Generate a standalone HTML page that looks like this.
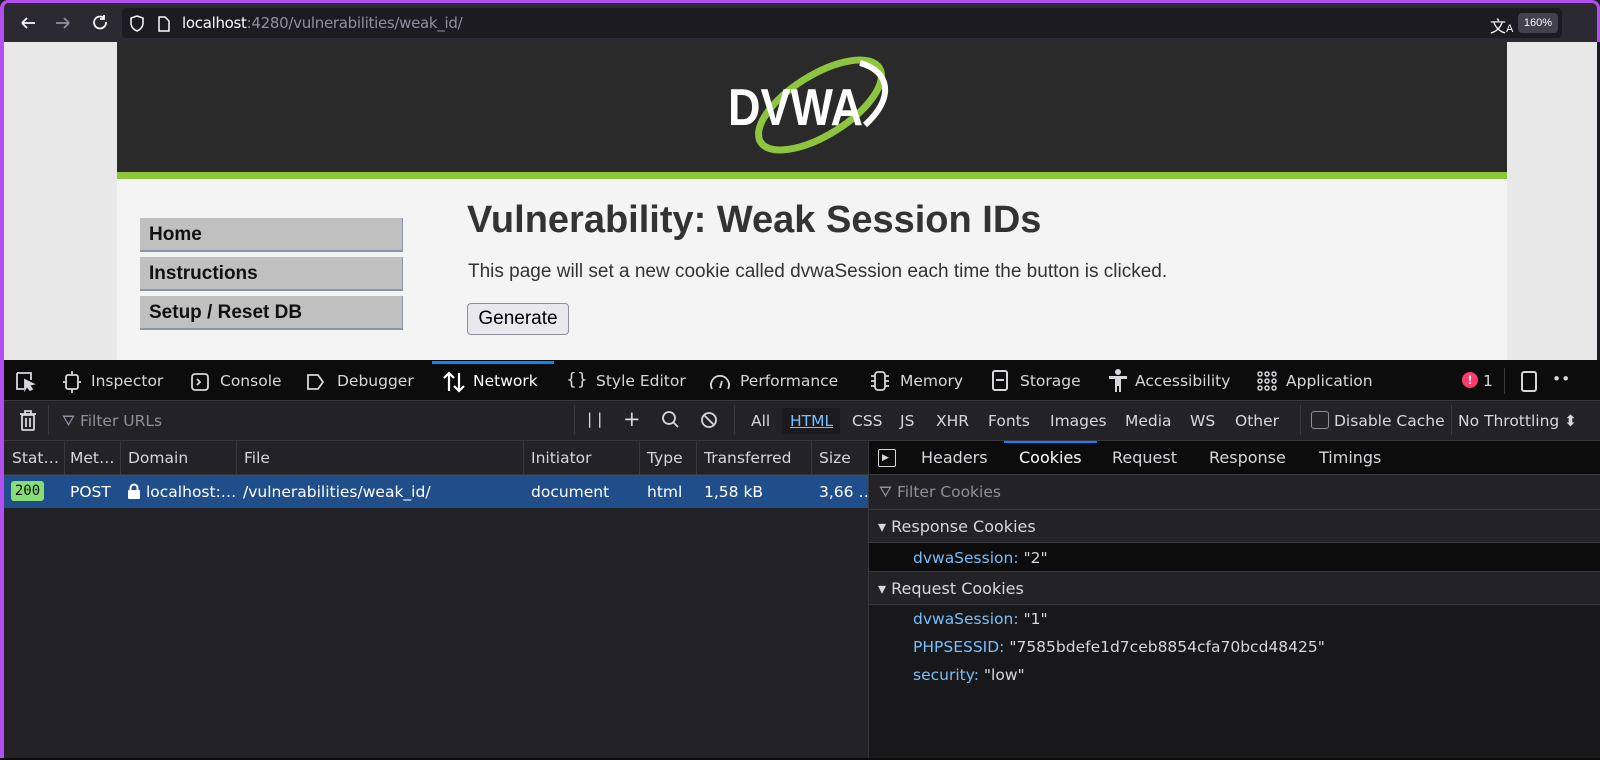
<!DOCTYPE html>
<html><head><meta charset="utf-8"><style>
*{margin:0;padding:0;box-sizing:border-box}
body{width:1600px;height:760px;overflow:hidden;background:#1c1b22;font-family:"Liberation Sans",sans-serif;position:relative}
.a{position:absolute}
.dt{font-family:"DejaVu Sans","Liberation Sans",sans-serif;font-size:15.5px;color:#d7d7db;white-space:nowrap}
.ic{stroke:#d7d7db;fill:none;stroke-width:1.8}
</style></head><body>
<div class="a" style="left:0;top:0;width:1600px;height:42px;background:#2b2a33;border-top:3px solid #b34ef0;border-left:4px solid #b34ef0;border-right:3px solid #b34ef0;border-radius:8px 8px 0 0"></div>
<div class="a" style="left:0;top:40px;width:4px;height:720px;background:#b34ef0"></div>
<svg class="a" style="left:18px;top:13px" width="100" height="20"><g stroke="#fbfbfe" stroke-width="1.8" fill="none"><path d="M4 10h13M4 10l5-5M4 10l5 5"/><path d="M38 10h13M51 10l-5-5M51 10l-5 5" stroke="#8f8f9d"/><path d="M86 5a6 6 0 1 0 2 4M86 2v4h-4"/></g></svg>
<div class="a" style="left:122px;top:8px;width:1440px;height:30px;background:#1c1b22;border-radius:4px"></div>
<svg class="a" style="left:128px;top:14px" width="50" height="20"><g stroke="#fbfbfe" stroke-width="1.5" fill="none"><path d="M9 2l6 2v5c0 4-3 7-6 8-3-1-6-4-6-8V4z"/><path d="M31 3h6l4 4v10h-10z"/></g></svg>
<div class="a" style="left:182px;top:14px;font-size:15px;color:#fbfbfe;font-family:'DejaVu Sans',sans-serif;letter-spacing:-0.3px">localhost<span style="color:#8f8f9d">:4280/vulnerabilities/weak_id/</span></div>
<div class="a" style="left:1490px;top:13px;font-size:16px;color:#fbfbfe">文<span style="font-size:11px">A</span></div>
<div class="a" style="left:1518px;top:13px;width:40px;height:20px;background:#42414d;border-radius:4px;color:#fbfbfe;font-size:11px;text-align:center;line-height:20px">160%</div>
<div class="a" style="left:4px;top:42px;width:1593px;height:318px;background:#e8e8e8"></div>
<div class="a" style="left:117px;top:42px;width:1390px;height:130px;background:#2a2a2a"></div>
<div class="a" style="left:117px;top:172px;width:1390px;height:7px;background:#8dc53e"></div>
<div class="a" style="left:117px;top:179px;width:1390px;height:181px;background:#f4f4f4"></div>
<svg class="a" style="left:720px;top:55px" width="185" height="100">
<ellipse cx="100" cy="50" rx="70" ry="30" transform="rotate(-32 100 50)" fill="none" stroke="#8dc53e" stroke-width="7"/>
<path d="M140 8c30 8 35 35 5 62" stroke="#fff" stroke-width="6" fill="none"/>
<text x="8" y="70" font-family="Liberation Sans" font-weight="bold" font-size="52" fill="#fff" textLength="135" lengthAdjust="spacingAndGlyphs">DVWA</text></svg>
<div class="a" style="left:140px;top:218px;width:263px;height:34px;background:#c0c0c0;border-bottom:2px solid #8a96a8;border-right:1px solid #8a96a8;font:bold 19px 'Liberation Sans';color:#111;padding:6px 9px">Home</div>
<div class="a" style="left:140px;top:257px;width:263px;height:34px;background:#c0c0c0;border-bottom:2px solid #8a96a8;border-right:1px solid #8a96a8;font:bold 19px 'Liberation Sans';color:#111;padding:6px 9px">Instructions</div>
<div class="a" style="left:140px;top:296px;width:263px;height:34px;background:#c0c0c0;border-bottom:2px solid #8a96a8;border-right:1px solid #8a96a8;font:bold 19px 'Liberation Sans';color:#111;padding:6px 9px">Setup / Reset DB</div>
<div class="a" style="left:467px;top:199px;font:bold 38px 'Liberation Sans';color:#333">Vulnerability: Weak Session IDs</div>
<div class="a" style="left:468px;top:261px;font-size:19px;color:#333">This page will set a new cookie called dvwaSession each time the button is clicked.</div>
<div class="a" style="left:467px;top:303px;width:102px;height:32px;background:#e9e9ed;border:1px solid #8f8f9d;border-radius:4px;font-size:19px;color:#000;text-align:center;line-height:30px">Generate</div>
<div class="a" style="left:4px;top:360px;width:1596px;height:41px;background:#0c0c0d;border-bottom:1px solid #38383d"></div>
<div class="a" style="left:432px;top:361px;width:122px;height:3px;background:#0a84ff"></div>
<svg class="a" style="left:14px;top:370px" width="400" height="24"><g class="ic"><path d="M3 3h14v7M3 3v16h7"/><path d="M11 10l8 4-4 1 3 4-2 1-3-4-2 3z" fill="#d7d7db"/><rect x="52" y="5" width="12" height="14" rx="2"/><path d="M58 1v4M58 19v4M49 12h3M64 12h3"/><rect x="178" y="4" width="16" height="16" rx="3"/><path d="M183 9l3 3-3 3"/><path d="M294 5h10l5 7-5 7h-10z"/></g></svg>
<svg class="a" style="left:442px;top:370px" width="24" height="24"><g stroke="#fff" stroke-width="2.2" fill="none"><path d="M7 21V3M2 8l5-5 5 5"/><path d="M17 3v18M12 16l5 5 5-5"/></g></svg>
<svg class="a" style="left:708px;top:370px" width="26" height="24"><g class="ic"><path d="M4 19a9 9 0 1 1 16 0"/><path d="M12 18l2-7"/></g></svg>
<svg class="a" style="left:868px;top:369px" width="26" height="24"><g class="ic"><rect x="7" y="3" width="10" height="18" rx="3"/><path d="M3 7h4M3 12h4M3 17h4M17 7h4M17 12h4M17 17h4"/></g></svg>
<svg class="a" style="left:1106px;top:368px" width="24" height="26"><g fill="#d7d7db"><circle cx="12" cy="4" r="3"/><path d="M3 8h18v3h-6v13h-2v-6h-2v6H9V11H3z"/></g></svg>
<svg class="a" style="left:1256px;top:370px" width="22" height="22"><g fill="none" stroke="#d7d7db" stroke-width="1.5"><circle cx="4" cy="4" r="2"/><circle cx="11" cy="4" r="2"/><circle cx="18" cy="4" r="2"/><circle cx="4" cy="11" r="2"/><circle cx="11" cy="11" r="2"/><circle cx="18" cy="11" r="2"/><circle cx="4" cy="18" r="2"/><circle cx="11" cy="18" r="2"/><circle cx="18" cy="18" r="2"/></g></svg>
<div class="a dt" style="left:91px;top:372px">Inspector</div>
<div class="a dt" style="left:220px;top:372px">Console</div>
<div class="a dt" style="left:337px;top:372px">Debugger</div>
<div class="a dt" style="left:473px;top:372px;color:#fff">Network</div>
<div class="a dt" style="left:566px;top:370px;font-size:17px">{}</div>
<div class="a dt" style="left:596px;top:372px">Style Editor</div>
<div class="a dt" style="left:740px;top:372px">Performance</div>
<div class="a dt" style="left:900px;top:372px">Memory</div>
<div class="a" style="left:992px;top:370px;width:16px;height:21px;border:2px solid #d7d7db;border-radius:3px"></div>
<div class="a" style="left:996px;top:379px;width:8px;height:2px;background:#d7d7db"></div>
<div class="a dt" style="left:1020px;top:372px">Storage</div>
<div class="a dt" style="left:1135px;top:372px">Accessibility</div>
<div class="a dt" style="left:1286px;top:372px">Application</div>
<div class="a" style="left:1462px;top:372px;width:16px;height:16px;border-radius:50%;background:#ff3b6b;color:#fff;font:bold 12px 'Liberation Sans';text-align:center;line-height:16px">!</div>
<div class="a dt" style="left:1483px;top:372px">1</div>
<div class="a" style="left:1504px;top:368px;width:1px;height:26px;background:#38383d"></div>
<div class="a" style="left:1521px;top:371px;width:16px;height:21px;border:2px solid #d7d7db;border-radius:3px"></div>
<div class="a dt" style="left:1552px;top:370px">••</div>
<div class="a" style="left:4px;top:401px;width:1596px;height:40px;background:#232327;border-bottom:1px solid #38383d"></div>
<svg class="a" style="left:18px;top:409px" width="20" height="24"><g class="ic"><path d="M2 5h16M7 5V2h6v3"/><rect x="4" y="6" width="12" height="15" rx="1"/><path d="M8 9v9M12 9v9"/></g></svg>
<div class="a" style="left:48px;top:405px;width:1px;height:30px;background:#38383d"></div>
<div class="a dt" style="left:62px;top:412px;color:#8f8f9d">⛛ Filter URLs</div>
<div class="a" style="left:574px;top:405px;width:1px;height:30px;background:#38383d"></div>
<div class="a dt" style="left:587px;top:410px">| |</div>
<div class="a dt" style="left:623px;top:407px;font-size:21px">+</div>
<svg class="a" style="left:660px;top:410px" width="60" height="20"><g class="ic"><circle cx="9" cy="8" r="6"/><path d="M13 12l5 5"/><circle cx="49" cy="10" r="7"/><path d="M44 5l10 10"/></g></svg>
<div class="a" style="left:734px;top:405px;width:1px;height:30px;background:#38383d"></div>
<div class="a dt" style="left:751px;top:412px">All</div>
<div class="a" style="left:782px;top:408px;width:58px;height:26px;background:#1b1b1d"></div>
<div class="a dt" style="left:790px;top:412px;color:#75bfff;text-decoration:underline">HTML</div>
<div class="a dt" style="left:852px;top:412px">CSS</div>
<div class="a dt" style="left:900px;top:412px">JS</div>
<div class="a dt" style="left:936px;top:412px">XHR</div>
<div class="a dt" style="left:988px;top:412px">Fonts</div>
<div class="a dt" style="left:1050px;top:412px">Images</div>
<div class="a dt" style="left:1125px;top:412px">Media</div>
<div class="a dt" style="left:1190px;top:412px">WS</div>
<div class="a dt" style="left:1235px;top:412px">Other</div>
<div class="a" style="left:1300px;top:405px;width:1px;height:30px;background:#38383d"></div>
<div class="a" style="left:1311px;top:411px;width:18px;height:18px;border:1.5px solid #8f8f9d;border-radius:3px"></div>
<div class="a dt" style="left:1334px;top:412px">Disable Cache</div>
<div class="a" style="left:1451px;top:405px;width:1px;height:30px;background:#38383d"></div>
<div class="a dt" style="left:1458px;top:412px">No Throttling ⬍</div>
<div class="a" style="left:4px;top:441px;width:864px;height:34px;background:#232327;border-bottom:1px solid #38383d"></div>
<div class="a dt" style="left:12px;top:449px">Stat…</div>
<div class="a dt" style="left:70px;top:449px">Met…</div>
<div class="a dt" style="left:128px;top:449px">Domain</div>
<div class="a dt" style="left:244px;top:449px">File</div>
<div class="a dt" style="left:531px;top:449px">Initiator</div>
<div class="a dt" style="left:647px;top:449px">Type</div>
<div class="a dt" style="left:704px;top:449px">Transferred</div>
<div class="a dt" style="left:819px;top:449px">Size</div>
<div class="a" style="left:64px;top:441px;width:1px;height:34px;background:#38383d"></div>
<div class="a" style="left:120px;top:441px;width:1px;height:34px;background:#38383d"></div>
<div class="a" style="left:236px;top:441px;width:1px;height:34px;background:#38383d"></div>
<div class="a" style="left:523px;top:441px;width:1px;height:34px;background:#38383d"></div>
<div class="a" style="left:639px;top:441px;width:1px;height:34px;background:#38383d"></div>
<div class="a" style="left:696px;top:441px;width:1px;height:34px;background:#38383d"></div>
<div class="a" style="left:811px;top:441px;width:1px;height:34px;background:#38383d"></div>
<div class="a" style="left:4px;top:475px;width:864px;height:33px;background:#204e8a"></div>
<div class="a" style="left:11px;top:481px;width:33px;height:20px;background:#86de74;border-radius:3px;color:#0b0b0b;font:14px 'DejaVu Sans Mono';text-align:center;line-height:20px">200</div>
<div class="a dt" style="left:70px;top:483px;color:#fff">POST</div>
<svg class="a" style="left:127px;top:483px" width="14" height="17"><rect x="1" y="7" width="12" height="9" rx="1" fill="#fff"/><path d="M3.5 7V5a3.5 3.5 0 0 1 7 0v2" stroke="#fff" stroke-width="2" fill="none"/></svg>
<div class="a dt" style="left:146px;top:483px;color:#fff">localhost:…</div>
<div class="a dt" style="left:243px;top:483px;color:#fff">/vulnerabilities/weak_id/</div>
<div class="a dt" style="left:531px;top:483px;color:#fff">document</div>
<div class="a dt" style="left:647px;top:483px;color:#fff">html</div>
<div class="a dt" style="left:704px;top:483px;color:#fff">1,58 kB</div>
<div class="a dt" style="left:819px;top:483px;color:#fff">3,66 …</div>
<div class="a" style="left:4px;top:508px;width:864px;height:252px;background:#232327"></div>
<div class="a" style="left:868px;top:441px;width:1px;height:319px;background:#38383d"></div>
<div class="a" style="left:869px;top:441px;width:731px;height:34px;background:#0c0c0d;border-bottom:1px solid #38383d"></div>
<div class="a" style="left:1004px;top:441px;width:93px;height:2px;background:#0a84ff"></div>
<div class="a" style="left:878px;top:449px;width:18px;height:18px;border:1.5px solid #d7d7db;border-radius:2px;color:#d7d7db;font-size:9px;line-height:15px;padding-left:3px">▶</div>
<div class="a dt" style="left:921px;top:448px;font-size:16px">Headers</div>
<div class="a dt" style="left:1019px;top:448px;font-size:16px;color:#fff">Cookies</div>
<div class="a dt" style="left:1112px;top:448px;font-size:16px">Request</div>
<div class="a dt" style="left:1209px;top:448px;font-size:16px">Response</div>
<div class="a dt" style="left:1319px;top:448px;font-size:16px">Timings</div>
<div class="a" style="left:869px;top:475px;width:731px;height:35px;background:#232327;border-bottom:1px solid #38383d"></div>
<div class="a dt" style="left:879px;top:483px;color:#8f8f9d">⛛ Filter Cookies</div>
<div class="a" style="left:869px;top:510px;width:731px;height:33px;background:#232327;border-bottom:1px solid #38383d"></div>
<div class="a dt" style="left:878px;top:517px;font-size:16px">▾ Response Cookies</div>
<div class="a" style="left:869px;top:543px;width:731px;height:28px;background:#0c0c0d"></div>
<div class="a dt" style="left:913px;top:549px;color:#75bfff">dvwaSession: <span style="color:#d7d7db">"2"</span></div>
<div class="a" style="left:869px;top:571px;width:731px;height:34px;background:#232327;border-top:1px solid #38383d;border-bottom:1px solid #38383d"></div>
<div class="a dt" style="left:878px;top:579px;font-size:16px">▾ Request Cookies</div>
<div class="a" style="left:869px;top:605px;width:731px;height:155px;background:#18181a"></div>
<div class="a dt" style="left:913px;top:610px;color:#75bfff">dvwaSession: <span style="color:#d7d7db">"1"</span></div>
<div class="a dt" style="left:913px;top:638px;color:#75bfff">PHPSESSID: <span style="color:#d7d7db">"7585bdefe1d7ceb8854cfa70bcd48425"</span></div>
<div class="a dt" style="left:913px;top:666px;color:#75bfff">security: <span style="color:#d7d7db">"low"</span></div>
<div class="a" style="left:0;top:758px;width:1600px;height:2px;background:#0c0c0d"></div>
</body></html>
